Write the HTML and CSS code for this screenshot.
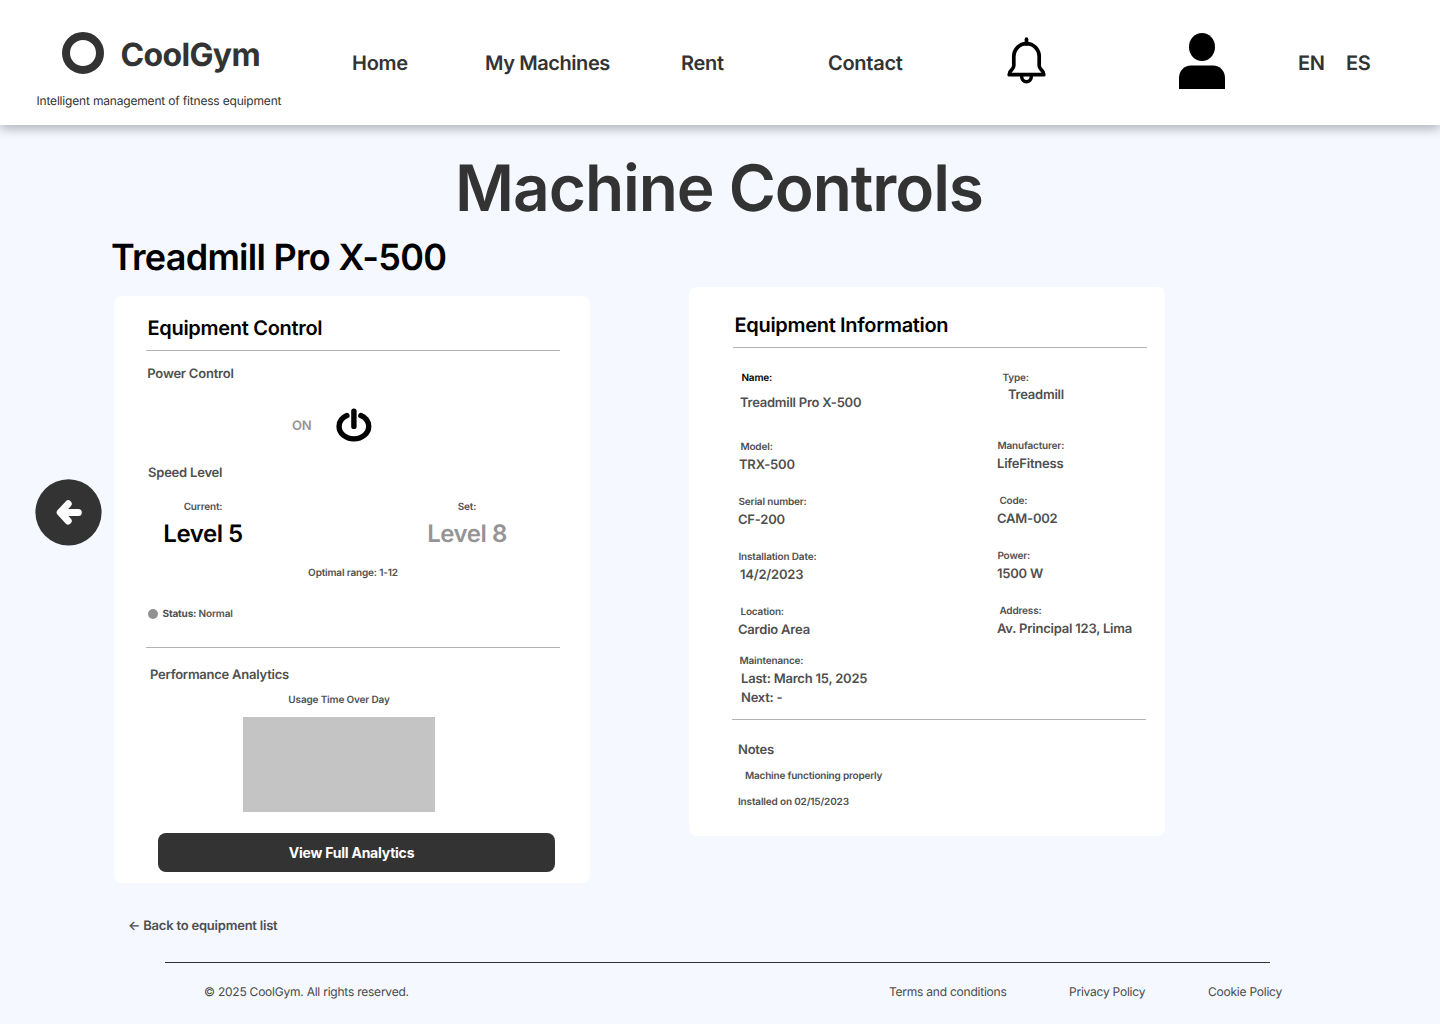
FILE: index.html
```html
<!DOCTYPE html>
<html lang="en">
<head>
<meta charset="utf-8">
<title>CoolGym – Machine Controls</title>
<link rel="stylesheet" href="styles.css">
</head>
<body>
<header class="header">
  <div class="brand">
    <div class="brand-row">
      <span class="brand-ring"></span>
      <span class="brand-name">CoolGym</span>
    </div>
    <p class="tagline">Intelligent management of fitness equipment</p>
  </div>
  <nav class="nav">
    <a>Home</a>
    <a class="nav-machines">My Machines</a>
    <a>Rent</a>
    <a>Contact</a>
  </nav>
  <svg class="bell" width="42" height="50" viewBox="0 0 42 50" fill="none" stroke="#000" stroke-width="3.7" stroke-linecap="round" stroke-linejoin="round">
    <path d="M20.5 3.2V8"/>
    <path d="M7.8 20.6A12.7 13 0 0 1 33.2 20.6V29.6C33.2 31.4 33.8 32.5 35.2 33.7C36.9 35.2 37.8 36.4 37.8 38.7H3.2C3.2 36.4 4.1 35.2 5.8 33.7C7.2 32.5 7.8 31.4 7.8 29.6Z"/>
    <path d="M15.6 40C15.6 47.6 25.4 47.6 25.4 40" stroke-width="3.5"/>
  </svg>
  <svg class="user" width="46" height="56" viewBox="0 0 46 56">
    <ellipse cx="23" cy="14" rx="13" ry="14"/>
    <path d="M0 56V45C0 38 5 32.5 12 32.5H34C41 32.5 46 38 46 45V56Z"/>
  </svg>
  <div class="langs"><a>EN</a><a>ES</a></div>
</header>

<main>
  <h1 class="page-title">Machine Controls</h1>
  <h2 class="machine-title">Treadmill Pro X-500</h2>

  <div class="content">
    <a class="back-button" aria-label="Back">
      <svg width="67" height="67" viewBox="0 0 67 67">
        <circle cx="33.5" cy="33.3" r="33.1" fill="#333"/>
        <path d="M33.2 24.8L25.2 33.4L33.2 42M26 33.4H43.3" fill="none" stroke="#fff" stroke-width="7" stroke-linecap="round" stroke-linejoin="round"/>
      </svg>
    </a>

    <section class="card card-control">
      <h3 class="card-title">Equipment Control</h3>
      <hr class="rule">
      <h4 class="subhead power-head">Power Control</h4>
      <div class="power">
        <span class="power-state">ON</span>
        <svg width="36" height="34" viewBox="0 0 36 34" fill="none" stroke="#000" stroke-width="5.4" stroke-linecap="round">
          <path d="M10.9 7.5C6 9.6 3.1 13.5 3.1 18.4C3.1 25.4 9.7 30.9 17.9 30.9S32.7 25.4 32.7 18.4C32.7 13.5 29.8 9.6 24.9 7.5"/>
          <path d="M17.9 3.2V18.4"/>
        </svg>
      </div>
      <h4 class="subhead speed-head">Speed Level</h4>
      <div class="levels">
        <div class="level"><span class="small">Current:</span><strong>Level 5</strong></div>
        <div class="level level-set"><span class="small">Set:</span><strong>Level 8</strong></div>
      </div>
      <p class="small range">Optimal range: 1-12</p>
      <p class="small status"><span class="dot"></span><span><b>Status:</b> Normal</span></p>
      <hr class="rule">
      <h4 class="subhead perf-head">Performance Analytics</h4>
      <figure class="usage">
        <figcaption class="small">Usage Time Over Day</figcaption>
        <div class="chart"></div>
      </figure>
      <button class="primary" type="button">View Full Analytics</button>
    </section>

    <section class="card card-info">
      <h3 class="card-title info-title">Equipment Information</h3>
      <hr class="rule">
      <div class="details">
        <dl>
          <div class="field name"><dt class="in3">Name:</dt><dd class="in2">Treadmill Pro X-500</dd></div>
          <div class="field"><dt class="in2">Model:</dt><dd class="in1">TRX-500</dd></div>
          <div class="field"><dt>Serial number:</dt><dd>CF-200</dd></div>
          <div class="field"><dt>Installation Date:</dt><dd class="in2">14/2/2023</dd></div>
          <div class="field"><dt class="in2">Location:</dt><dd>Cardio Area</dd></div>
          <div class="field maintenance"><dt class="in1">Maintenance:</dt><dd class="in3">Last: March 15, 2025</dd><dd class="in3 next">Next: -</dd></div>
        </dl>
        <dl>
          <div class="field type"><dt>Type:</dt><dd>Treadmill</dd></div>
          <div class="field"><dt>Manufacturer:</dt><dd>LifeFitness</dd></div>
          <div class="field"><dt class="in2">Code:</dt><dd>CAM-002</dd></div>
          <div class="field"><dt>Power:</dt><dd>1500 W</dd></div>
          <div class="field"><dt class="in2">Address:</dt><dd>Av. Principal 123, Lima</dd></div>
        </dl>
      </div>
      <hr class="rule notes-rule">
      <h4 class="subhead notes-head">Notes</h4>
      <p class="small note note-first">Machine functioning properly</p>
      <p class="small note">Installed on 02/15/2023</p>
    </section>
  </div>

  <a class="back-link">← Back to equipment list</a>
</main>

<footer class="footer">
  <span class="copyright">© 2025 CoolGym. All rights reserved.</span>
  <a class="terms">Terms and conditions</a>
  <a class="privacy">Privacy Policy</a>
  <a>Cookie Policy</a>
</footer>
</body>
</html>
```
FILE: styles.css
```css
* {
  box-sizing: border-box;
  margin: 0;
  padding: 0;
  letter-spacing: -0.0165em;
}

body {
  width: 1440px;
  height: 1024px;
  overflow: hidden;
  background: #f5f8ff;
  color: #4f4f4f;
  font-family: Inter, "Liberation Sans", sans-serif;
  text-rendering: geometricPrecision;
  white-space: nowrap;
}

svg { display: block; }

/* Header */
.header {
  display: flex;
  align-items: flex-start;
  height: 125px;
  background: #fff;
  box-shadow: 0 4px 10px rgba(0, 0, 0, 0.28);
  color: #333;
}

.brand { width: 351px; padding-top: 32px; }
.brand-row { display: flex; gap: 16.5px; padding-left: 62px; }
.brand-ring { width: 42px; height: 42px; border: 8px solid #333; border-radius: 50%; }
.brand-name { padding-top: 3px; font-size: 32px; font-weight: 700; line-height: 40px; letter-spacing: -0.65px; }
.tagline { margin: 18px 0 0 36.5px; font-size: 12px; line-height: 16px; letter-spacing: -0.18px; }

.nav {
  display: grid;
  grid-template-columns: 133px 196px 147px 179px;
  margin-top: 53px;
  font-size: 20px;
  font-weight: 600;
  line-height: 20px;
}
.nav a { padding-left: 1px; letter-spacing: -0.28px; }
.nav .nav-machines { letter-spacing: -0.42px; }

.bell { margin-top: 36px; }
.user { margin: 33px 0 0 131px; }
.langs { display: grid; grid-template-columns: 48px auto; margin: 53px 0 0 73px; font-size: 20px; font-weight: 600; line-height: 20px; }

/* Headings */
.page-title { margin-top: 32px; padding-right: 2px; color: #333; font-size: 64px; font-weight: 600; line-height: 64px; text-align: center; letter-spacing: -1.06px; }
.machine-title { margin: 16px 0 0 111px; color: #000; font-size: 36px; font-weight: 600; line-height: 40px; letter-spacing: -0.72px; }

.content { display: flex; align-items: flex-start; }
.back-button { margin: 202px 0 0 35px; }

/* Cards */
.card { width: 476px; border-radius: 8px; background: #fff; }
.card-control { height: 587px; margin: 19px 0 0 12px; padding: 20px 30px 0 32px; }
.card-info { height: 549px; margin: 10px 0 0 99px; padding: 26px 18px 0 44px; }
.card-title { margin-left: 1.5px; color: #000; font-size: 20px; font-weight: 600; line-height: 24px; letter-spacing: -0.3px; }
.info-title { letter-spacing: -0.31px; }
.rule { height: 1px; margin-top: 10px; border: 0; background: #b3b3b3; }
.subhead { font-size: 13px; font-weight: 600; line-height: 16px; }
.small { font-size: 10px; font-weight: 600; line-height: 12px; }

.power-head { margin: 15px 0 0 1.3px; }
.power { display: flex; align-items: center; margin: 26px 0 0 146px; }
.power-state { width: 44px; padding-top: 2px; color: #949494; font-size: 13px; font-weight: 600; line-height: 16px; }
.speed-head { margin: 23px 0 0 2px; }
.levels { display: flex; gap: 184px; margin: 20px 0 0 17px; }
.level { display: flex; flex-direction: column; align-items: center; gap: 7px; width: 80px; }
.level strong { color: #000; font-size: 24px; font-weight: 600; line-height: 28px; letter-spacing: -0.45px; }
.level-set strong { color: #949494; }
.range { margin-top: 19px; text-align: center; }
.status { display: flex; gap: 4.5px; margin: 29px 0 27px 2px; }
.status b { font-weight: 700; }
.dot { width: 10px; height: 10px; margin-top: 1px; border-radius: 50%; background: #919191; }
.perf-head { margin: 19px 0 0 4px; letter-spacing: -0.24px; }
.usage { width: 192px; margin: 11px 0 0 97px; text-align: center; }
.chart { height: 95px; margin-top: 11px; background: #c4c4c4; }
.primary {
  display: block;
  width: 397px;
  height: 39px;
  margin: 21px 0 0 12px;
  padding: 1px 10px 0 0;
  border: 0;
  border-radius: 8px;
  background: #333;
  color: #fff;
  font: 700 14px/20px Inter, "Liberation Sans", sans-serif;
}

/* Equipment details */
.details { display: grid; grid-template-columns: 259px auto; margin: 24px 0 0 5.4px; }
.field { margin-bottom: 23px; }
.field dt { font-size: 10px; font-weight: 600; line-height: 12px; }
.field dd { margin: 4px 0 0 -0.4px; font-size: 13px; font-weight: 600; line-height: 16px; }
.name { margin-bottom: 30px; }
.name dt { color: #000; }
.field.name dd { margin-top: 11px; letter-spacing: -0.25px; }
.maintenance { margin: -6px 0 0; }
.field.maintenance .next { margin-top: 3px; }
.type { margin-bottom: 37px; }
.type dt { margin-left: 5px; }
.field.type dd { margin: 3px 0 0 10.5px; }
.in1 { padding-left: 1px; }
.in2 { padding-left: 2px; }
.in3 { padding-left: 3px; }
.notes-rule { width: 414px; margin: 13px 0 0 -1px; }
.notes-head { margin: 22px 0 12px 5px; }
.note { margin: 0 0 14px 5px; }
.note-first { margin-left: 12px; letter-spacing: -0.2px; }

.back-link { display: block; margin: 33px 0 0 128px; font-size: 13px; font-weight: 600; line-height: 20px; }

/* Footer */
.footer {
  display: flex;
  width: 1105px;
  margin: 26px 0 0 165px;
  padding: 21px 0 0 39px;
  border-top: 1px solid #333;
  color: #4a4a4a;
  font-size: 12px;
  line-height: 16px;
}
.footer * { flex: none; letter-spacing: -0.23px; }
.copyright { width: 685px; }
.terms { width: 180px; }
.privacy { width: 139px; }
```
